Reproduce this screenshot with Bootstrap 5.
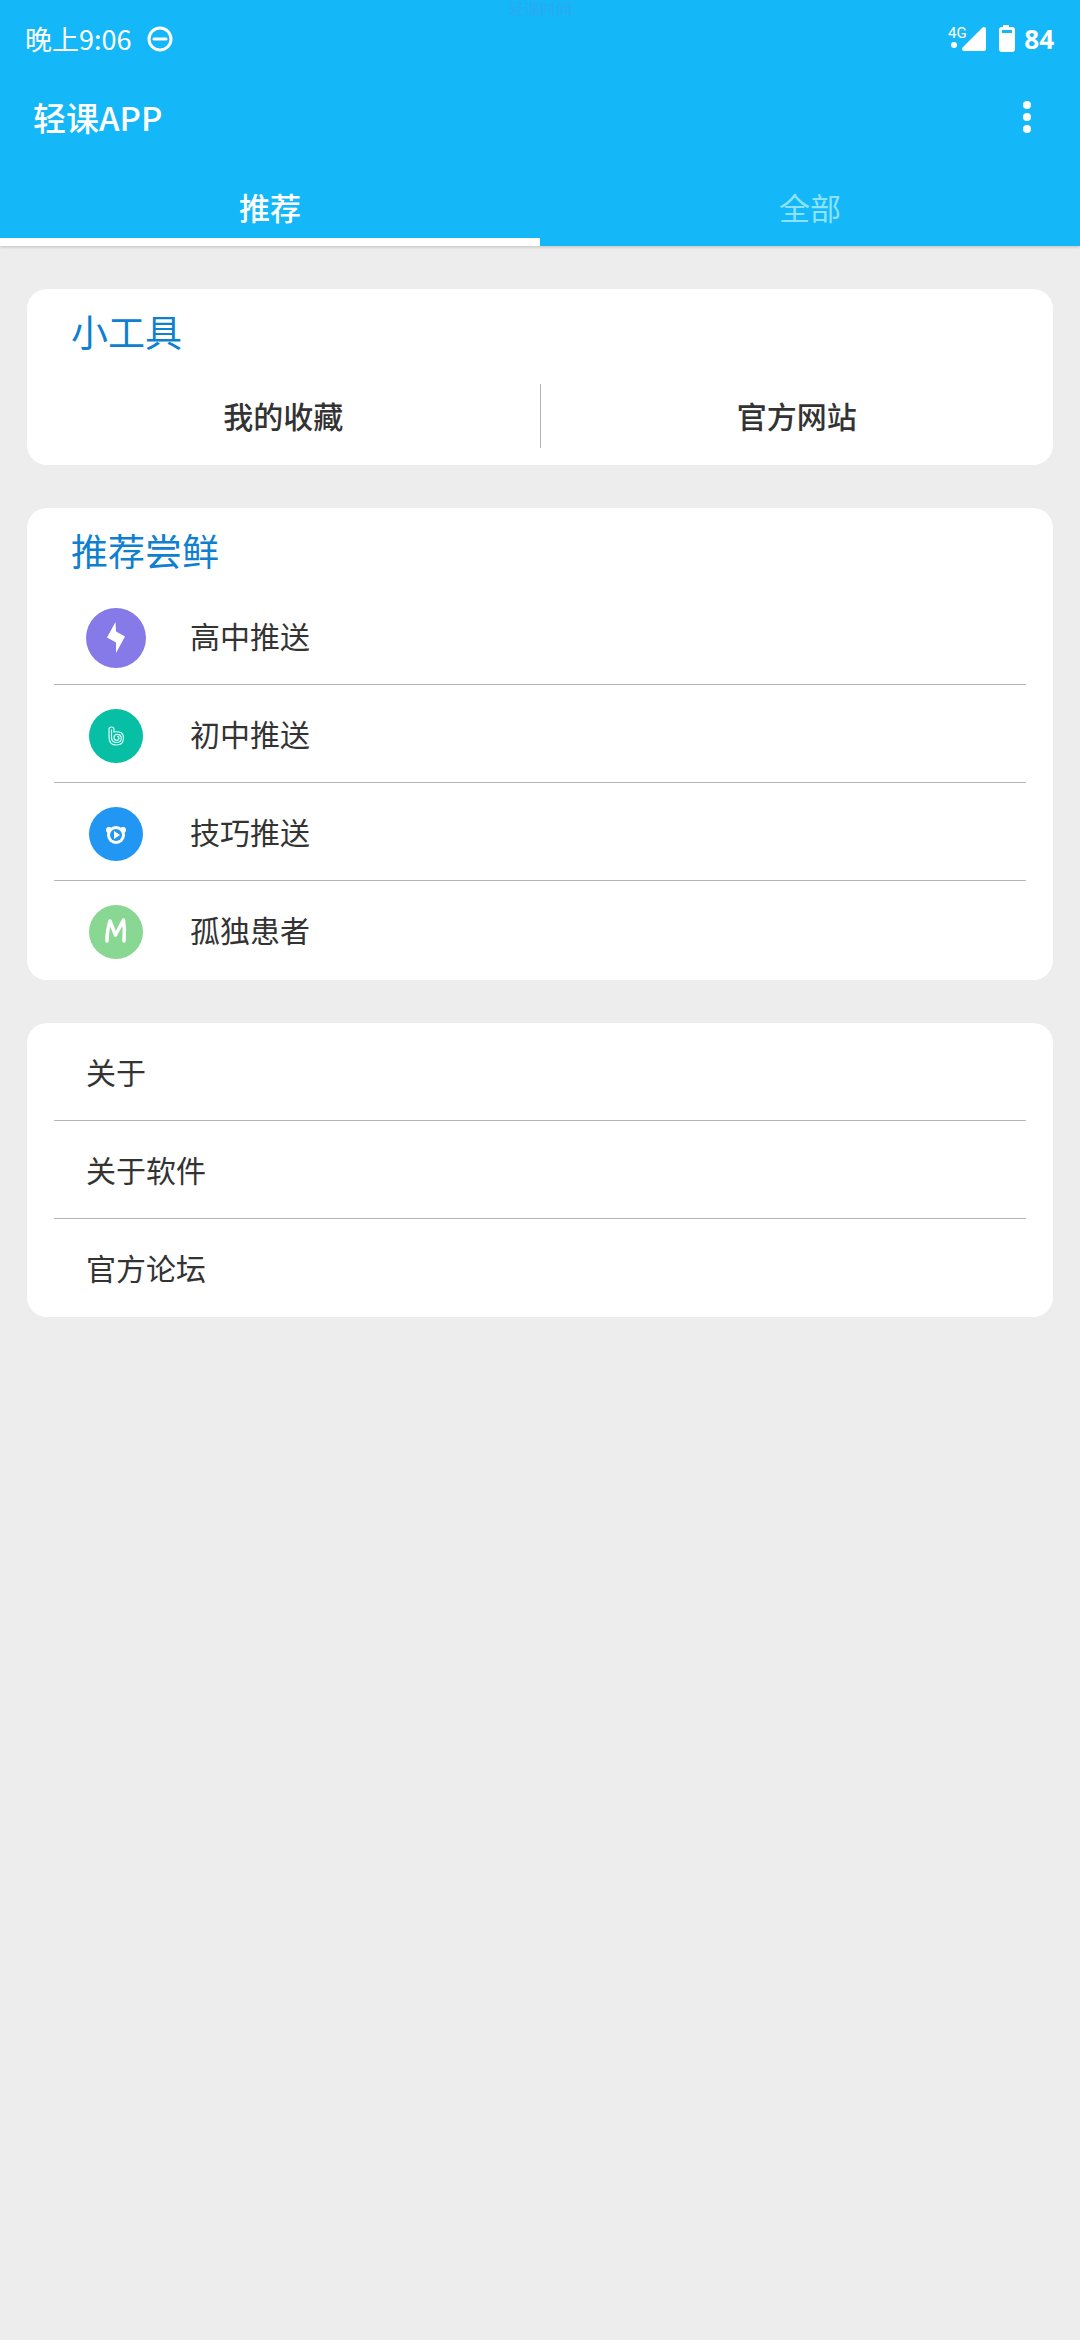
<!DOCTYPE html>
<html lang="zh-CN">
<head>
<meta charset="utf-8">
<meta name="viewport" content="width=device-width, initial-scale=1">
<title>轻课APP</title>
<link href="https://cdn.jsdelivr.net/npm/bootstrap@5.3.0/dist/css/bootstrap.min.css" rel="stylesheet">
<style>
  body { background: #ededed; color: #333; font-family: "Noto Sans CJK SC", sans-serif; font-size: 30px; line-height: 40px; }
  .app-header { background: #14b7f7; box-shadow: 0 1px 3px rgba(0,0,0,.2); }
  .status-bar { height: 78px; padding: 0 26px 0 25px; font-size: 27px; }
  .status-bar .battery-level { font-family: "Open Sans", sans-serif; font-size: 26px; font-weight: 700; }
  .notch-note { top: 0; font-size: 16px; line-height: 16px; color: #2ba9f4; }
  .title-bar { height: 80px; padding: 0 33px 2px; font-size: 33px; font-weight: 500; }
  .menu-btn { margin-right: 8px; }
  .app-tabs .nav-link { height: 88px; padding: 12px 0 0; border-radius: 0; border-bottom: 8px solid transparent; color: #8de2fd; font-size: 31px; line-height: 74px; }
  .app-tabs .nav-link.active { color: #fff; border-color: #fff; font-weight: 500; }
  .tab-text { display: block; height: 66px; }
  .app-main { padding: 43px 27px; gap: 43px; }
  .panel { --bs-card-border-width: 0; --bs-card-border-radius: 20px; --bs-card-inner-border-radius: 20px; }
  .panel-title { height: 79px; padding: 2px 44px 0; font-size: 37px; line-height: 80px; font-weight: 400; color: #0e80cf; }
  .tool-link { height: 97px; padding-bottom: 4px; color: #333; font-weight: 500; }
  .tool-rule { width: 1px; height: 64px; margin-top: 16px; background: #b5b5b5; }
  .panel-list { margin: 0 27px; --bs-list-group-color: #333; }
  .panel-list.with-icons { padding-bottom: 1px; }
  .panel-row { height: 98px; padding: 0 32px 2px; border-color: #b5b5b5; gap: 44px; }
  .row-icon { width: 60px; height: 60px; margin-top: 6px; }
</style>
</head>
<body>
<header class="app-header text-white position-relative">
  <div class="status-bar d-flex align-items-center justify-content-between">
    <div class="d-flex align-items-center gap-3">
      <span>晚上9:06</span>
      <svg width="26" height="26" viewBox="0 0 26 26" fill="none" stroke="#fff" stroke-width="3" aria-hidden="true"><circle cx="13" cy="13" r="11"/><path d="M7 13h12" stroke-linecap="round"/></svg>
    </div>
    <div class="d-flex align-items-center gap-2">
      <svg width="68" height="28" viewBox="0 0 68 28" fill="#fff" aria-hidden="true">
        <text x="0" y="13" font-family="Roboto, sans-serif" font-size="15">4G</text>
        <circle cx="6" cy="20" r="3"/>
        <path d="M36 4v20H16z" stroke="#fff" stroke-width="4" stroke-linejoin="round"/>
        <path fill-rule="evenodd" d="M55 0h6v2h3q3 0 3 3v19q0 3-3 3H54q-3 0-3-3V5q0-3 3-3h1zM54 5v3h10V5z"/>
      </svg>
      <span class="battery-level">84</span>
    </div>
  </div>
  <div class="notch-note position-absolute start-50 translate-middle-x" aria-hidden="true">轻课时间</div>
  <div class="title-bar d-flex align-items-center justify-content-between">
    <span>轻课APP</span>
    <button type="button" class="menu-btn btn p-0 border-0 d-flex" aria-label="更多">
      <svg width="24" height="32" viewBox="0 0 24 32" fill="#fff"><circle cx="12" cy="4" r="4"/><circle cx="12" cy="16" r="4"/><circle cx="12" cy="28" r="4"/></svg>
    </button>
  </div>
  <nav class="app-tabs nav nav-fill">
    <a class="nav-link active w-50" href="#" aria-current="page"><span class="tab-text">推荐</span></a>
    <a class="nav-link w-50" href="#"><span class="tab-text">全部</span></a>
  </nav>
</header>

<main class="app-main d-flex flex-column">
  <section class="panel card">
    <h2 class="panel-title m-0">小工具</h2>
    <div class="d-flex">
      <a class="tool-link flex-fill w-50 d-flex align-items-center justify-content-center text-decoration-none" href="#">我的收藏</a>
      <div class="tool-rule flex-shrink-0"></div>
      <a class="tool-link flex-fill w-50 d-flex align-items-center justify-content-center text-decoration-none" href="#">官方网站</a>
    </div>
  </section>

  <section class="panel card">
    <h2 class="panel-title m-0">推荐尝鲜</h2>
    <div class="panel-list with-icons list-group list-group-flush">
      <a class="panel-row list-group-item d-flex align-items-center" href="#">
        <svg class="row-icon" viewBox="0 0 60 60" aria-hidden="true"><circle cx="30" cy="30" r="30" fill="#867ae9"/><path fill="#fff" d="M29.500 14 21 29.500l9 5V45l9-16.500-9-5z"/></svg>
        <span>高中推送</span>
      </a>
      <a class="panel-row list-group-item d-flex align-items-center" href="#">
        <svg class="row-icon" viewBox="0 0 60 60" aria-hidden="true"><circle cx="30" cy="30" r="27" fill="#06bfa4"/><g fill="none" stroke="#d8fff7" stroke-width="1.200"><path d="M23 31V23.500q0-2.500 2.500-2.500t2.500 2.500V26q9.500-1.500 9.500 6 0 7-7 7-7.500 0-7.500-8z"/><path d="M25.500 23.500V31q0 5.500 5 5.500t4.800-4.500q-.3-4-4.800-3.700-2.500.4-2.500 3 0 3 2.500 3t2.500-2.300q0-1.800-2-1.700"/></g></svg>
        <span>初中推送</span>
      </a>
      <a class="panel-row list-group-item d-flex align-items-center" href="#">
        <svg class="row-icon" viewBox="0 0 60 60" aria-hidden="true"><circle cx="30" cy="30" r="27" fill="#2196f3"/><g fill="#fff"><circle cx="23" cy="26" r="3"/><circle cx="37" cy="26" r="3"/><circle cx="30" cy="31" r="9"/></g><circle cx="30" cy="31" r="6" fill="#2196f3"/><path fill="#fff" d="M28 27v8l6-4z"/></svg>
        <span>技巧推送</span>
      </a>
      <a class="panel-row list-group-item d-flex align-items-center" href="#">
        <svg class="row-icon" viewBox="0 0 60 60" aria-hidden="true"><circle cx="30" cy="30" r="27" fill="#88d792"/><path d="M21 39q0-11 3-20l5.500 14L37.500 18q1.500 10 .5 21" fill="none" stroke="#fff" stroke-width="3.500" stroke-linecap="round" stroke-linejoin="round"/></svg>
        <span>孤独患者</span>
      </a>
    </div>
  </section>

  <section class="panel card">
    <div class="panel-list list-group list-group-flush">
      <a class="panel-row list-group-item d-flex align-items-center" href="#">关于</a>
      <a class="panel-row list-group-item d-flex align-items-center" href="#">关于软件</a>
      <a class="panel-row list-group-item d-flex align-items-center" href="#">官方论坛</a>
    </div>
  </section>
</main>
<script src="https://cdn.jsdelivr.net/npm/bootstrap@5.3.0/dist/js/bootstrap.bundle.min.js"></script>
</body>
</html>
